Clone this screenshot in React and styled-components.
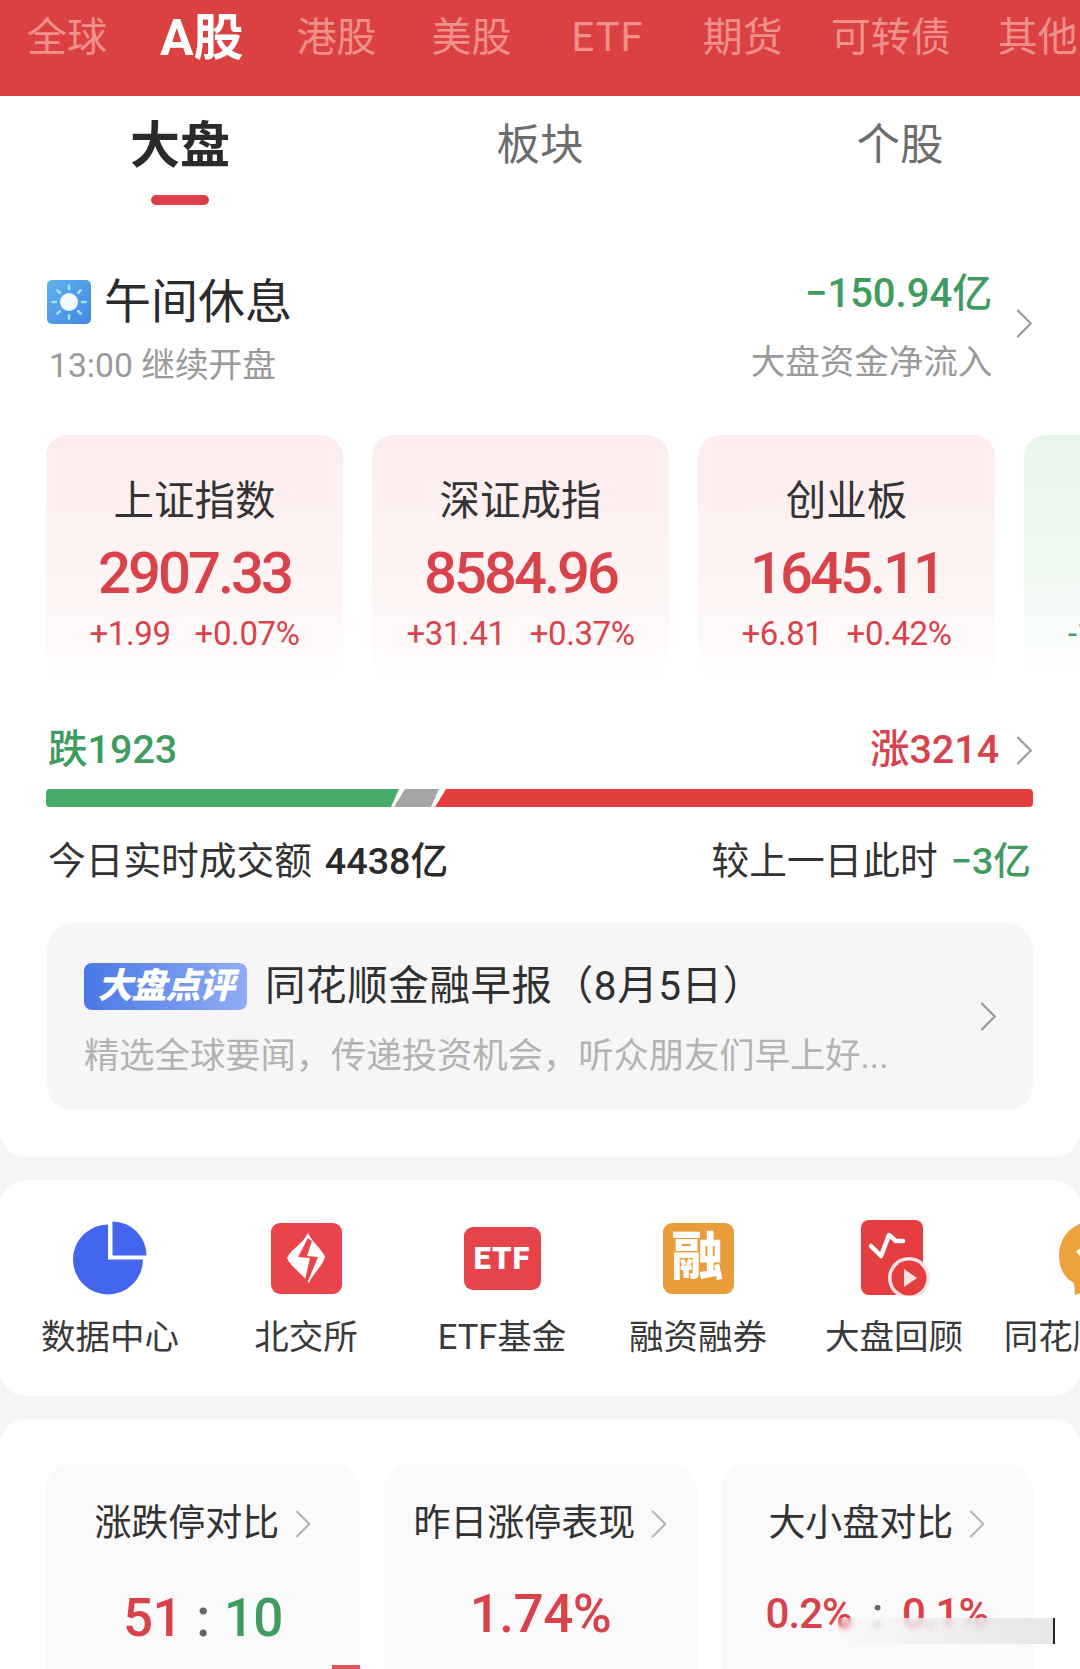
import React from 'react';
import styled, { createGlobalStyle } from 'styled-components';

const GlobalStyle = createGlobalStyle`
html, body {
    margin:0;
    padding:0;
    background:#f5f5f5;
}
* { box-sizing:border-box; }
`;

const RED = '#d8434b';
const GREEN = '#3f9c5f';
const FONT = `Roboto, "Noto Sans CJK SC", sans-serif`;

const Page = styled.div`
position:relative;
width:1080px;
height:1669px;
overflow:hidden;
background:#f5f5f5;
font-family:${FONT};
color:#2b2b2b;
`;
const MarketBar = styled.div`
display:flex;
align-items:center;
gap:53px;
height:96px;
padding:0 0 20px 27px;
background:#dc4141;
white-space:nowrap;
`;
const MarketTab = styled.div`
flex:none;
margin-left:${p => p.$shift || 0}px;
font-size:${p => p.$active ? 50 : 40}px;
font-weight:${p => p.$active ? 700 : 400};
letter-spacing:${p => p.$spaced ? 1 : 0}px;
line-height:50px;
color:${p => p.$active ? '#fff' : '#f0908c'};
`;
const Panel = styled.section`
background:#fff;
border-radius:${p => p.$flat ? '0 0 26px 26px' : '26px'};
margin-top:${p => p.$flat ? 0 : 23}px;
`;
const SubTabs = styled.div`
display:grid;
grid-template-columns:repeat(3, 1fr);
height:110px;
padding-top:25px;
`;
const SubTab = styled.div`
display:flex;
flex-direction:column;
align-items:center;
`;
const SubLabel = styled.div`
height:50px;
line-height:50px;
font-size:${p => p.$active ? 50 : 43.5}px;
font-weight:${p => p.$active ? 700 : 400};
color:${p => p.$active ? '#2b2b2b' : '#6d6d6d'};
`;
const Indicator = styled.div`
width:58px;
height:10px;
margin-top:24px;
border-radius:5px;
background:#dc3f45;
`;
const MainBody = styled.div`
padding:67px 47px 47px 46px;
`;
const StatusRow = styled.div`
display:flex;
justify-content:space-between;
align-items:flex-start;
`;
const StatusLeft = styled.div`
margin-top:6px;
`;
const StatusTitle = styled.div`
display:flex;
align-items:center;
gap:13px;
height:46px;
padding-left:1px;
font-size:47px;
line-height:46px;
color:#2b2b2b;
`;
const StatusSub = styled.div`
margin-top:21px;
padding-left:3px;
font-size:33.7px;
line-height:40px;
color:#9a9a9a;
`;
const StatusRight = styled.div`
display:flex;
align-items:center;
gap:24px;
`;
const ChevronLift = styled.div`
display:flex;
margin-bottom:6px;
`;
const FlowCol = styled.div`
text-align:right;
`;
const FlowValue = styled.div`
height:40px;
margin-top:1px;
font-size:40px;
line-height:40px;
font-weight:500;
color:${GREEN};
`;
const FlowLabel = styled.div`
margin-top:30px;
font-size:34.5px;
line-height:36px;
color:#9a9a9a;
`;
const IndexRow = styled.div`
display:flex;
gap:29px;
margin:49px -47px 0 0;
overflow:hidden;
`;
const IndexCard = styled.div`
flex:none;
width:297px;
height:252px;
padding-top:46px;
border-radius:22px;
text-align:center;
white-space:nowrap;
background:linear-gradient(180deg, ${p => p.$down ? '#e6f5ea 0%, #f3faf5 65%' : '#fdeced 0%, #fef5f5 65%'}, #fff 100%);
`;
const IndexName = styled.div`
font-size:40.5px;
line-height:40px;
color:#333;
`;
const IndexValue = styled.div`
margin-top:21px;
font-size:58px;
line-height:62px;
font-weight:500;
letter-spacing:-3px;
color:${p => p.$down ? GREEN : RED};
`;
const IndexChange = styled.div`
display:flex;
justify-content:center;
gap:24px;
margin-top:12px;
font-size:33px;
line-height:36px;
letter-spacing:-.4px;
color:${p => p.$down ? GREEN : RED};
`;
const BreadthRow = styled.div`
display:flex;
justify-content:space-between;
align-items:center;
height:44px;
margin-top:41px;
padding-left:2px;
font-size:39.5px;
line-height:44px;
font-weight:500;
`;
const BreadthSide = styled.div`
display:flex;
align-items:center;
color:${p => p.$up ? RED : GREEN};
`;
const BreadthEnd = styled.div`
display:flex;
align-items:center;
gap:17px;
`;
const BreadthBar = styled.div`
display:flex;
height:18px;
margin-top:17px;
border-radius:4px;
overflow:hidden;
`;
const BreadthGreen = styled.div`
flex:none;
width:353px;
background:#45ab66;
clip-path:polygon(0 0, 100% 0, calc(100% - 8px) 100%, 0 100%);
`;
const BreadthGray = styled.div`
flex:none;
width:45px;
margin-left:-5px;
background:#a5a5a5;
clip-path:polygon(11px 0, 100% 0, calc(100% - 8px) 100%, 0 100%);
`;
const BreadthRed = styled.div`
flex:1;
margin-left:-4px;
background:#e33e3e;
clip-path:polygon(11px 0, 100% 0, 100% 100%, 0 100%);
`;
const TurnoverRow = styled.div`
display:flex;
justify-content:space-between;
align-items:center;
height:44px;
margin-top:32px;
padding:0 2px;
font-size:37.7px;
line-height:44px;
color:#333;
`;
const TurnoverValue = styled.span`
margin-left:13px;
font-weight:500;
color:${p => p.$green ? GREEN : '#2b2b2b'};
`;
const NewsCard = styled.div`
display:flex;
justify-content:space-between;
align-items:center;
height:187px;
margin:40px 0 0 1px;
padding:0 36px 0 37px;
border-radius:26px;
background:#f6f6f6;
`;
const NewsBody = styled.div`
padding-top:8px;
`;
const NewsTitleRow = styled.div`
display:flex;
align-items:center;
gap:18px;
height:47px;
`;
const NewsBadge = styled.div`
width:163px;
height:47px;
border-radius:8px;
text-align:center;
font-size:35px;
line-height:47px;
font-weight:900;
font-style:italic;
letter-spacing:-1px;
color:#fff;
background:linear-gradient(90deg, #4b78e6 0%, #8fadf3 100%);
`;
const NewsTitle = styled.div`
font-size:40.5px;
line-height:47px;
letter-spacing:.6px;
color:#2f2f2f;
`;
const NewsText = styled.div`
margin-top:24px;
font-size:35.3px;
line-height:44px;
white-space:nowrap;
color:#b3b3b3;
`;
const ShortcutRow = styled.div`
display:flex;
height:216px;
padding:40px 0 0 12px;
overflow:hidden;
`;
const Shortcut = styled.div`
flex:none;
width:196px;
display:flex;
flex-direction:column;
align-items:center;
white-space:nowrap;
`;
const ShortcutIcon = styled.div`
display:flex;
justify-content:center;
align-items:center;
height:76px;
`;
const ShortcutLabel = styled.div`
margin-top:21px;
font-size:34.5px;
line-height:40px;
color:#3a3a3a;
`;
const TileIcon = styled.div`
display:flex;
justify-content:center;
align-items:center;
width:${p => p.$w}px;
height:${p => p.$h}px;
border-radius:9px;
color:#fff;
font-weight:900;
font-size:${p => p.$size}px;
line-height:1;
letter-spacing:1px;
background:${p => p.$bg};
`;
const StatsGrid = styled.div`
display:grid;
grid-template-columns:314px 313px 312px;
gap:24px;
padding:44px 45px 0 46px;
`;
const StatCard = styled.div`
height:240px;
padding-top:41px;
border-radius:26px;
background:#fafafa;
text-align:center;
white-space:nowrap;
`;
const StatTitle = styled.div`
display:flex;
justify-content:center;
align-items:center;
gap:16px;
height:40px;
font-size:37px;
line-height:40px;
color:#333;
`;
const StatValue = styled.div`
display:flex;
justify-content:center;
align-items:center;
gap:${p => p.$small ? 20 : 14}px;
height:60px;
margin-top:${p => p.$low ? 44 : 40}px;
font-size:${p => p.$small ? 42 : 53}px;
line-height:60px;
font-weight:500;
letter-spacing:${p => p.$small ? -1 : -.5}px;
`;
const StatPart = styled.span`
color:${p => p.$color};
`;
const Watermark = styled.div`
position:absolute;
left:838px;
top:1618px;
width:217px;
height:26px;
border-right:2px solid #222;
backdrop-filter:blur(3px);
background:linear-gradient(90deg, rgba(255,255,255,0) 0%, rgba(245,245,245,.7) 12%, rgba(226,226,226,.85) 100%);
`;
const CornerScrap = styled.div`
position:absolute;
left:332px;
top:1665px;
width:28px;
height:4px;
background:#e0565c;
`;

const Chevron = ({ h = 29, color = '#9c9c9c' }) => (
    <svg width={h * 0.58} height={h} viewBox="0 0 17 29" fill="none" style={{ flex: 'none' }}>
        <path d="M2 1.5 L15 14.5 L2 27.5" stroke={color} strokeWidth="2.2" strokeLinecap="round" strokeLinejoin="round" />
    </svg>
);

const SunIcon = () => (
    <svg width="44" height="44" viewBox="0 0 44 44">
        <defs>
            <linearGradient id="sunBg" x1="0" y1="0" x2="1" y2="1">
                <stop offset="0" stopColor="#5cb2ef" />
                <stop offset="1" stopColor="#4686e2" />
            </linearGradient>
        </defs>
        <rect width="44" height="44" rx="5" fill="url(#sunBg)" />
        <circle cx="22" cy="22" r="9" fill="#f2fbff" />
        <g stroke="#a5e3f7" strokeWidth="2.6" strokeLinecap="round">
            <path d="M22 5.5V9M22 35v3.5M5.5 22H9M35 22h3.5M10.3 10.3l2.5 2.5M31.2 31.2l2.5 2.5M33.7 10.3l-2.5 2.5M12.8 31.2l-2.5 2.5" />
        </g>
    </svg>
);

const PieIcon = () => (
    <svg width="74" height="74" viewBox="0 0 74 74" fill="#4466ee">
        <path d="M39.5 0.5A34 34 0 0 1 73.5 34.5H39.5Z" />
        <path d="M35 38.5H70A35 35 0 1 1 35 3.5Z" />
    </svg>
);

const BoltIcon = () => (
    <svg width="71" height="71" viewBox="0 0 71 71">
        <rect width="71" height="71" rx="9" fill="#e9444b" />
        <path d="M37 10C41 19 51 26 54 34C51 44 42 50 38 60C32 52 20 44 16 35C20 26 32 21 37 10Z" fill="#fff" />
        <path d="M37 15L27 34L39 35L34 57L37 58L47 34L36 33L41 18Z" fill="#e9444b" />
    </svg>
);

const ReviewIcon = () => (
    <svg width="74" height="76" viewBox="0 0 74 76" style={{ marginLeft: 4 }}>
        <rect x="2" y="0" width="62" height="75" rx="8" fill="#e53e41" />
        <path d="M12 26L22 36L30 15L37 21H44" fill="none" stroke="#fff" strokeWidth="4.5" strokeLinecap="round" strokeLinejoin="round" />
        <circle cx="50" cy="58" r="21" fill="#fbe4e4" />
        <circle cx="50" cy="58" r="17.5" fill="#e53e41" />
        <path d="M45 49L58 58L45 67Z" fill="#f8e3e3" />
    </svg>
);

const BubbleIcon = () => (
    <svg width="72" height="76" viewBox="0 0 72 76" style={{ marginLeft: 8 }}>
        <path d="M36 1C16 1 1 16 1 35C1 50 8 59 16 63L17 75L36 68C56 68 71 54 71 35C71 16 56 1 36 1Z" fill="#eda33b" />
        <path d="M20 30L30 42L44 22" fill="none" stroke="#fff" strokeWidth="5" />
    </svg>
);

const markets = [
    { name: '全球' },
    { name: 'A股', active: true },
    { name: '港股' },
    { name: '美股', shift: 2 },
    { name: 'ETF', shift: 7, spaced: true },
    { name: '期货', shift: 6 },
    { name: '可转债', shift: -5 },
    { name: '其他', shift: -6 },
];
const subTabs = ['大盘', '板块', '个股'];
const indexes = [
    { name: '上证指数', value: '2907.33', change: '+1.99', pct: '+0.07%' },
    { name: '深证成指', value: '8584.96', change: '+31.41', pct: '+0.37%' },
    { name: '创业板', value: '1645.11', change: '+6.81', pct: '+0.42%' },
    { name: '北证50', value: '741.58', change: '-13.99', pct: '-0.07%', down: true },
];
const shortcuts = [
    { label: '数据中心', icon: <PieIcon /> },
    { label: '北交所', icon: <BoltIcon /> },
    { label: 'ETF基金', icon: <TileIcon $w={77} $h={63} $size={31} $bg="#e6444b">ETF</TileIcon> },
    { label: '融资融券', icon: <TileIcon $w={71} $h={71} $size={52} $bg="#e89d3a">融</TileIcon> },
    { label: '大盘回顾', icon: <ReviewIcon /> },
    { label: '同花顺热点', icon: <BubbleIcon /> },
];

export default function App() {
    return (
        <Page>
            <GlobalStyle />
            <MarketBar>
                {markets.map(m => <MarketTab key={m.name} $active={m.active} $shift={m.shift} $spaced={m.spaced}>{m.name}</MarketTab>)}
            </MarketBar>
            <Panel $flat>
                <SubTabs>
                    {subTabs.map((t, i) => (
                        <SubTab key={t}>
                            <SubLabel $active={i === 0}>{t}</SubLabel>
                            {i === 0 && <Indicator />}
                        </SubTab>
                    ))}
                </SubTabs>
                <MainBody>
                    <StatusRow>
                        <StatusLeft>
                            <StatusTitle><SunIcon />午间休息</StatusTitle>
                            <StatusSub>13:00 继续开盘</StatusSub>
                        </StatusLeft>
                        <StatusRight>
                            <FlowCol>
                                <FlowValue>−150.94亿</FlowValue>
                                <FlowLabel>大盘资金净流入</FlowLabel>
                            </FlowCol>
                            <ChevronLift><Chevron /></ChevronLift>
                        </StatusRight>
                    </StatusRow>
                    <IndexRow>
                        {indexes.map(x => (
                            <IndexCard key={x.name} $down={x.down}>
                                <IndexName>{x.name}</IndexName>
                                <IndexValue $down={x.down}>{x.value}</IndexValue>
                                <IndexChange $down={x.down}><span>{x.change}</span><span>{x.pct}</span></IndexChange>
                            </IndexCard>
                        ))}
                    </IndexRow>
                    <BreadthRow>
                        <BreadthSide>跌1923</BreadthSide>
                        <BreadthEnd>
                            <BreadthSide $up>涨3214</BreadthSide>
                            <Chevron />
                        </BreadthEnd>
                    </BreadthRow>
                    <BreadthBar>
                        <BreadthGreen />
                        <BreadthGray />
                        <BreadthRed />
                    </BreadthBar>
                    <TurnoverRow>
                        <div>今日实时成交额<TurnoverValue>4438亿</TurnoverValue></div>
                        <div>较上一日此时<TurnoverValue $green>−3亿</TurnoverValue></div>
                    </TurnoverRow>
                    <NewsCard>
                        <NewsBody>
                            <NewsTitleRow>
                                <NewsBadge>大盘点评</NewsBadge>
                                <NewsTitle>同花顺金融早报（8月5日）</NewsTitle>
                            </NewsTitleRow>
                            <NewsText>精选全球要闻，传递投资机会，听众朋友们早上好...</NewsText>
                        </NewsBody>
                        <Chevron />
                    </NewsCard>
                </MainBody>
            </Panel>
            <Panel>
                <ShortcutRow>
                    {shortcuts.map(s => (
                        <Shortcut key={s.label}>
                            <ShortcutIcon>{s.icon}</ShortcutIcon>
                            <ShortcutLabel>{s.label}</ShortcutLabel>
                        </Shortcut>
                    ))}
                </ShortcutRow>
            </Panel>
            <Panel>
                <StatsGrid>
                    <StatCard>
                        <StatTitle>涨跌停对比<Chevron h={28} color="#b5b5b5" /></StatTitle>
                        <StatValue $low>
                            <StatPart $color={RED}>51</StatPart>
                            <StatPart $color="#666">:</StatPart>
                            <StatPart $color={GREEN}>10</StatPart>
                        </StatValue>
                    </StatCard>
                    <StatCard>
                        <StatTitle>昨日涨停表现<Chevron h={28} color="#b5b5b5" /></StatTitle>
                        <StatValue><StatPart $color={RED}>1.74%</StatPart></StatValue>
                    </StatCard>
                    <StatCard>
                        <StatTitle>大小盘对比<Chevron h={28} color="#b5b5b5" /></StatTitle>
                        <StatValue $small>
                            <StatPart $color={RED}>0.2%</StatPart>
                            <StatPart $color="#666">:</StatPart>
                            <StatPart $color={RED}>0.1%</StatPart>
                        </StatValue>
                    </StatCard>
                </StatsGrid>
            </Panel>
            <Watermark />
            <CornerScrap />
        </Page>
    );
}
